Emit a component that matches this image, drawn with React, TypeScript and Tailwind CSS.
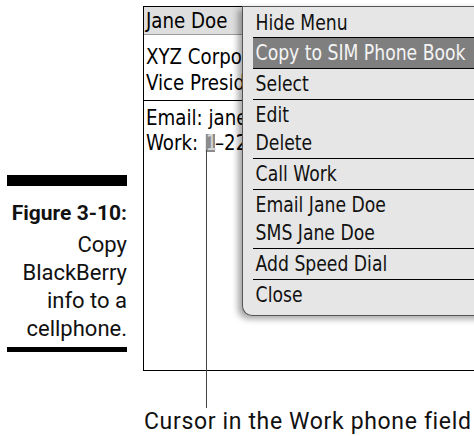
import React from "react";

const bb = { fontFamily: '"DejaVu Sans Condensed", "DejaVu Sans", sans-serif' };
const book = { fontFamily: 'Roboto, "Liberation Sans", sans-serif' };

function Item({ children }: { children: React.ReactNode }) {
  return (
    <div className="h-[28px] leading-[28px] pl-[3px] whitespace-nowrap origin-left scale-x-[0.87]">{children}</div>
  );
}

function Line({ children }: { children: React.ReactNode }) {
  return <div className="whitespace-nowrap origin-left scale-x-[0.92]">{children}</div>;
}

export default function App() {
  return (
    <div className="relative w-[474px] h-[436px] bg-white overflow-hidden flex text-black">
      {/* Figure caption */}
      <aside className="w-[143px] shrink-0 pt-[175px] pl-[7px] pr-[16px]" style={book}>
        <div className="h-[11px] bg-black" />
        <div className="text-right pt-[13px] text-[#111]">
          <div className="font-bold text-[21px] leading-[28px]">Figure 3-10:</div>
          <div className="text-[22px] leading-[28px] mt-[4px]">
            <div>Copy</div>
            <div>BlackBerry</div>
            <div>info to a</div>
            <div>cellphone.</div>
          </div>
        </div>
        <div className="h-[5px] bg-black mt-[4px]" />
      </aside>

      {/* Device screen + caption */}
      <div className="flex flex-col">
        <div className="mt-[6px] w-[340px] h-[367px] border-l border-t border-b border-black bg-white overflow-hidden" style={bb}>
          <div className="h-[28px] bg-[#dedede] border-b border-[#9a9a9a] pl-[2px] text-[22px] leading-[27px]">
            <Line>Jane Doe</Line>
          </div>
          <div className="pl-[2px] pt-[9px] pb-[4px] text-[22px] leading-[26px] border-b border-black">
            <Line>XYZ Corporation</Line>
            <Line>Vice President</Line>
          </div>
          <div className="pl-[2px] pt-[4px] text-[22px] leading-[25px]">
            <Line>Email: janedoe@xyzcorp.com</Line>
            <Line>
              Work:{" "}
              <span className="ml-[2px] bg-[#8c8c8c] text-[#d8d8d8] inline-block w-[10px] leading-[18px] text-center">1</span>
              –222-555-1234
            </Line>
          </div>
        </div>
        <div className="mt-[37px] pl-[1px] text-[23px] leading-[28px] tracking-[0.65px] whitespace-nowrap text-[#111]" style={book}>
          Cursor in the Work phone field
        </div>
      </div>

      {/* Callout line */}
      <div className="absolute left-[206px] top-[150px] w-px h-[258px] bg-[#444]" />

      {/* Popup menu */}
      <div
        className="absolute left-[242px] top-[6px] w-[260px] h-[310px] bg-[#e6e6e6] border-l border-t border-b border-[#555] rounded-bl-[10px] shadow-[-4px_3px_6px_rgba(0,0,0,0.35)] text-[22px] text-[#111]"
        style={bb}
      >
        <div className="ml-[10px]">
          <div className="pt-[2px] border-b border-black">
            <Item>Hide Menu</Item>
          </div>
          <div className="pt-[1px] pb-[1px] bg-[#7f7f7f] text-[#f4f4f4] border-b border-black">
            <Item>Copy to SIM Phone Book</Item>
          </div>
          <div className="pt-[1px] pb-[1px] border-b border-black">
            <Item>Select</Item>
          </div>
          <div className="pt-[1px] pb-[1px] border-b border-black">
            <Item>Edit</Item>
            <Item>Delete</Item>
          </div>
          <div className="pt-[1px] pb-[1px] border-b border-black">
            <Item>Call Work</Item>
          </div>
          <div className="pt-[1px] pb-[1px] border-b border-black">
            <Item>Email Jane Doe</Item>
            <Item>SMS Jane Doe</Item>
          </div>
          <div className="pt-[1px] pb-[1px] border-b border-black">
            <Item>Add Speed Dial</Item>
          </div>
          <div className="pt-[1px]">
            <Item>Close</Item>
          </div>
        </div>
      </div>
    </div>
  );
}
